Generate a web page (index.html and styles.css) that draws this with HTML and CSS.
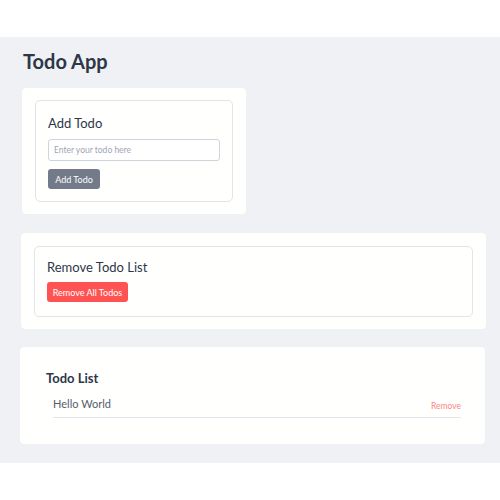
FILE: index.html
```html
<!DOCTYPE html>
<html>
<head>
<meta charset="utf-8">
<link rel="stylesheet" href="styles.css">
</head>
<body>
<main class="page">
  <h1 class="title">Todo App</h1>
  <section class="card card-add">
    <div class="box">
      <h2 class="box-title">Add Todo</h2>
      <input class="input" type="text" placeholder="Enter your todo here">
      <button class="btn btn-gray">Add Todo</button>
    </div>
  </section>
  <section class="card card-wide">
    <div class="box box-wide">
      <h2 class="box-title">Remove Todo List</h2>
      <button class="btn btn-red">Remove All Todos</button>
    </div>
  </section>
  <section class="card card-list">
    <h2 class="list-title">Todo List</h2>
    <ul class="list">
      <li class="item"><span class="item-text">Hello World</span><span class="item-remove">Remove</span></li>
    </ul>
  </section>
</main>
</body>
</html>
```
FILE: styles.css
```css
html, body {
  margin: 0;
  padding: 0;
  background: #ffffff;
}
body {
  font-family: Lato, "Noto Sans", sans-serif;
  color: #2d3748;
}
.page {
  margin-top: 37px;
  height: 426px;
  box-sizing: border-box;
  background: #f0f1f4;
  padding: 10px 14px 0 20px;
  display: flex;
  flex-direction: column;
}
.title {
  margin: 0 0 0 3px;
  font-size: 20px;
  line-height: 28px;
  font-weight: 700;
  color: #2d3748;
}
.card {
  background: #fffffe;
  border-radius: 4px;
  box-shadow: 0 0 1px rgba(0,0,0,0.06);
}
.card-add {
  margin-top: 13px;
  margin-left: 2px;
  width: 224px;
  height: 126px;
  box-sizing: border-box;
  padding: 12px 13px;
}
.box {
  border: 1px solid #e2e4ec;
  border-radius: 5px;
  height: 100%;
  box-sizing: border-box;
  padding: 12px 12px;
}
.box-title {
  margin: 0;
  font-size: 13px;
  line-height: 20px;
  font-weight: 400;
  color: #2d3748;
}
.input {
  display: block;
  margin-top: 6px;
  width: 172px;
  height: 22px;
  box-sizing: border-box;
  border: 1px solid #cfd3dd;
  border-radius: 3px;
  padding: 0 5px;
  font-family: inherit;
  font-size: 8.5px;
  outline: none;
}
.input::placeholder {
  color: #a0a6b4;
}
.btn {
  display: block;
  border: none;
  border-radius: 3px;
  color: #ffffff;
  font-family: inherit;
  font-size: 9px;
  height: 20px;
  padding: 0;
  white-space: nowrap;
  text-align: center;
}
.btn-gray {
  margin-top: 8px;
  width: 52px;
  background: #737b8a;
}
.card-wide {
  margin-top: 19px;
  margin-left: 1px;
  width: 465px;
  height: 96px;
  box-sizing: border-box;
  padding: 13px 13px 12px 13px;
}
.box-wide {
  padding: 10px 12px;
}
.btn-red {
  margin-top: 5px;
  width: 81px;
  background: #ff5252;
}
.card-list {
  margin-top: 18px;
  width: 465px;
  height: 97px;
  box-sizing: border-box;
  padding: 22px 24px 0 26px;
}
.list-title {
  margin: 0;
  font-size: 13px;
  line-height: 18px;
  font-weight: 700;
  color: #2d3748;
}
.list {
  list-style: none;
  margin: 10px 0 0 7px;
  padding: 0;
}
.item {
  display: flex;
  justify-content: space-between;
  align-items: flex-end;
  border-bottom: 1px solid #e3e5ec;
  padding-bottom: 6px;
}
.item-text {
  font-size: 11px;
  line-height: 14px;
  color: #555c6b;
}
.item-remove {
  font-size: 8.5px;
  line-height: 10px;
  color: #fc8585;
}
```
